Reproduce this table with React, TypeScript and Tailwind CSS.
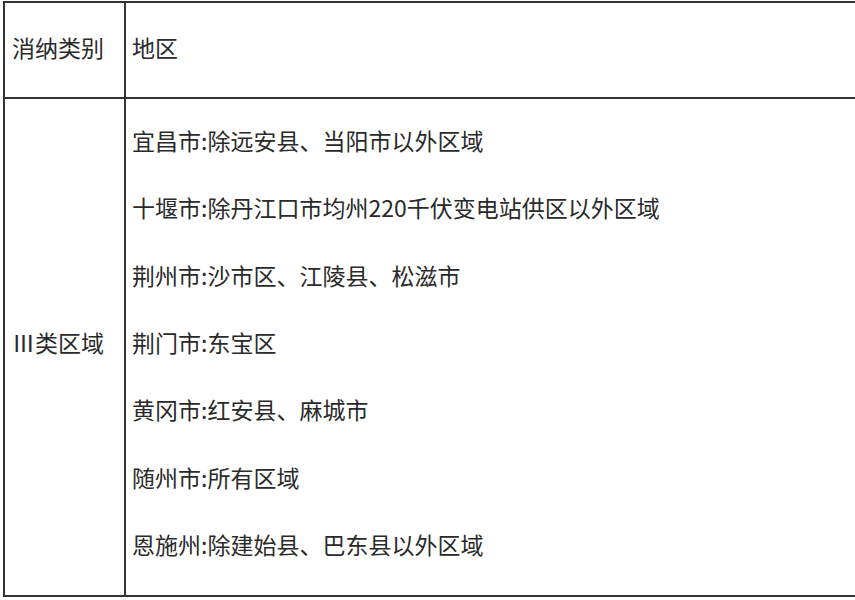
// 消纳类别 / 地区 表格
const regions = [
  '宜昌市:除远安县、当阳市以外区域',
  '十堰市:除丹江口市均州220千伏变电站供区以外区域',
  '荆州市:沙市区、江陵县、松滋市',
  '荆门市:东宝区',
  '黄冈市:红安县、麻城市',
  '随州市:所有区域',
  '恩施州:除建始县、巴东县以外区域',
]

export default function App() {
  return (
    <div
      className="w-[855px] h-[600px] overflow-hidden bg-white pl-[3px] pt-[1px] text-[23px] text-[#2a2a2a]"
      style={{ fontFamily: '"Noto Sans CJK SC", "Noto Sans", sans-serif' }}
    >
      <div className="w-[900px] border-t-2 border-l-2 border-[#333]">
        {/* 表头 */}
        <div className="grid grid-cols-[121px_1fr] border-b-2 border-[#333]">
          <div className="h-[94px] border-r-2 border-[#333] pl-[7px] pt-[27px] leading-[34px]">
            消纳类别
          </div>
          <div className="h-[94px] pl-[6px] pt-[27px] leading-[34px]">地区</div>
        </div>

        {/* 内容 */}
        <div className="grid grid-cols-[121px_1fr] border-b-2 border-[#333]">
          <div className="h-[496px] border-r-2 border-[#333] pl-[7px] pb-[10px] flex items-center">
            Ⅲ类区域
          </div>
          <div className="h-[496px] pl-[6px] pt-[8px] flex flex-col">
            {regions.map(r => (
              <div key={r} className="h-[67.33px] leading-[67.33px] whitespace-nowrap">
                {r}
              </div>
            ))}
          </div>
        </div>
      </div>
    </div>
  )
}
